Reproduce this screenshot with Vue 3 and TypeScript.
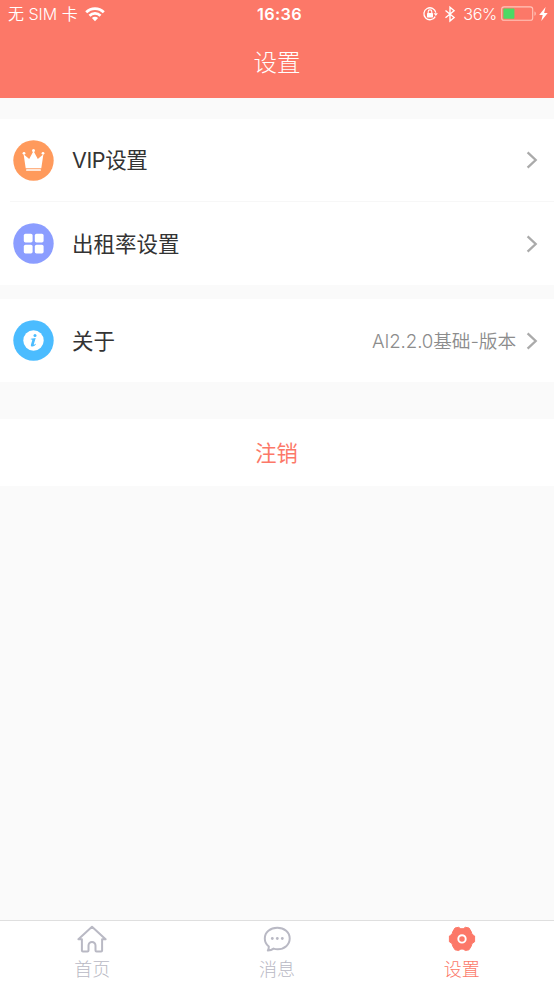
<script setup lang="ts">
import { ref } from 'vue'

interface Row {
  id: string
  label: string
  value?: string
}

const groups: Row[][] = [
  [
    { id: 'vip', label: 'VIP设置' },
    { id: 'rate', label: '出租率设置' },
  ],
  [{ id: 'about', label: '关于', value: 'AI2.2.0基础-版本' }],
]

const tabs = [
  { id: 'home', label: '首页' },
  { id: 'message', label: '消息' },
  { id: 'settings', label: '设置' },
]

const active = ref('settings')
</script>

<template>
  <div class="screen">
    <header class="top">
      <div class="status">
        <div class="carrier">
          <span>无 SIM 卡</span>
          <svg class="wifi" width="20" height="15" viewBox="0 0 20 15">
            <g fill="none" stroke="#fff" stroke-width="2.7">
              <path d="M1.2 5.3C6.1.3 13.9.3 18.8 5.3" />
              <path d="M4.5 8.7c3-3 8-3 11 0" />
            </g>
            <path fill="#fff" d="M6.9 11.1c1.8-1.7 4.4-1.7 6.2 0L10 14.2z" />
          </svg>
        </div>
        <div class="time">16:36</div>
        <div class="indicators">
          <svg width="16" height="16" viewBox="0 0 16 16">
            <path d="M13.2 10.6A6 6 0 1 1 13.8 6.6" fill="none" stroke="#fff" stroke-width="1.3" />
            <path d="M11.6 7.2h4.3l-2.1 2.8z" fill="#fff" />
            <rect x="5" y="7" width="6" height="4.4" rx=".6" fill="#fff" />
            <path d="M6.2 7V5.7a1.8 1.8 0 0 1 3.6 0V7" fill="none" stroke="#fff" stroke-width="1.1" />
          </svg>
          <svg class="bluetooth" width="12" height="18" viewBox="0 0 12 18">
            <path d="M1.5 5.5l8.6 7L6 16V2.3l4.1 3.5-8.6 7" fill="none" stroke="#fff" stroke-width="1.4" />
          </svg>
          <span class="percent">36%</span>
          <svg class="battery" width="36" height="16" viewBox="0 0 36 16">
            <rect x=".7" y=".9" width="31" height="13.4" rx="2.4" fill="none" stroke="#ffc5bb" stroke-width="1.1" />
            <rect x="2.4" y="2.5" width="11" height="10.2" rx=".8" fill="#4cd964" />
            <path d="M33.5 5.5c1.7.6 1.7 3.7 0 4.3z" fill="#ffc5bb" />
          </svg>
          <svg class="bolt" width="9" height="14" viewBox="0 0 9 14">
            <path d="M6.6 0L.2 7.9h3.5L2.3 14l6.4-8.1H5.1z" fill="#fff" />
          </svg>
        </div>
      </div>
      <h1 class="title">设置</h1>
    </header>

    <main class="content">
      <section v-for="(group, index) in groups" :key="index" class="group">
        <div v-for="row in group" :key="row.id" class="row">
          <svg class="row-icon" width="41" height="41" viewBox="0 0 41 41">
            <template v-if="row.id === 'vip'">
              <circle cx="20.5" cy="20.5" r="20.2" fill="#ff9a5c" />
              <path d="M10.6 14.2l5.6 4.8 4.3-8 4.3 8 5.6-4.8-2.1 14H12.7z" fill="#fff" />
              <g fill="#fff">
                <circle cx="11" cy="13.3" r="1.4" />
                <circle cx="20.5" cy="10.5" r="1.5" />
                <circle cx="30" cy="13.3" r="1.4" />
                <rect x="13.1" y="29.2" width="14.8" height="1.6" rx=".5" />
              </g>
            </template>
            <template v-else-if="row.id === 'rate'">
              <circle cx="20.5" cy="20.5" r="20.2" fill="#8b9dff" />
              <g fill="#fff">
                <rect x="10.8" y="10.7" width="8.8" height="8.8" rx="1.7" />
                <rect x="21.8" y="10.7" width="8.8" height="8.8" rx="1.7" />
                <rect x="10.8" y="21.7" width="8.8" height="8.8" rx="1.7" />
                <rect x="21.8" y="21.7" width="8.8" height="8.8" rx="1.7" />
              </g>
            </template>
            <template v-else>
              <circle cx="20.5" cy="20.5" r="20.2" fill="#4bbcff" />
              <circle cx="20.5" cy="20.5" r="10.2" fill="#fff" />
              <circle cx="22" cy="15.6" r="1.5" fill="#4bbcff" />
              <path d="M17.8 18.8l4.9-.7-1.9 6.2c-.2.8.6.6 1.7-.6l.5.4c-1.2 1.8-2.4 2.5-3.6 2.5-1.4 0-1.8-1-1.4-2.2l1.3-4.4c.1-.5-.4-.6-1.5-.6z" fill="#4bbcff" />
            </template>
          </svg>
          <span class="label" :class="row.id">{{ row.label }}</span>
          <span v-if="row.value" class="value">{{ row.value }}</span>
          <svg class="chevron" width="12" height="18" viewBox="0 0 12 18">
            <path d="M1.6 1.4L9.7 9l-8.1 7.6" fill="none" stroke="#aaa" stroke-width="2.3" />
          </svg>
        </div>
      </section>
      <button class="logout" type="button">注销</button>
    </main>

    <nav class="tabs">
      <button
        v-for="tab in tabs"
        :key="tab.id"
        type="button"
        class="tab"
        :class="{ active: active === tab.id }"
        @click="active = tab.id"
      >
        <svg width="30" height="28" viewBox="0 0 30 28" fill="none" stroke="currentColor" stroke-width="2">
          <path
            v-if="tab.id === 'home'"
            d="M1.4 14.3L15 1.8l13.6 12.5h-3.5v11.2q0 1-1 1h-4.6q-1 0-1-1v-5.1a3.5 3.5 0 0 0-7 0v5.1q0 1-1 1H5.9q-1 0-1-1V14.3z"
            stroke-linejoin="round"
          />
          <template v-else-if="tab.id === 'message'">
            <path d="M15.3 2.8c7 0 12.4 4.6 12.4 10.7s-5.2 10.7-12.1 10.7c-1.5 0-2.8-.2-4-.6-1.6 1.2-3.5 1.8-5.8 1.9.8-1.1 1.1-2.4 1-4C4.2 19.5 2.8 16.8 2.8 13.5 2.8 7.4 8.3 2.8 15.3 2.8z" stroke-linejoin="round" />
            <g fill="currentColor" stroke="none">
              <circle cx="10.3" cy="13.5" r="1.4" />
              <circle cx="15.3" cy="13.5" r="1.4" />
              <circle cx="20.3" cy="13.5" r="1.4" />
            </g>
          </template>
          <template v-else>
            <path
              d="M8 3L11.6 2.3Q15 5.4 18.4 2.3L22 3L24.2 6.6Q24.2 9.8 27.6 11V16.8Q24.2 18 24.2 21.2L22 24.8L18.4 25.5Q15 22.4 11.6 25.5L8 24.8L5.8 21.2Q5.8 18 2.4 16.8V11Q5.8 9.8 5.8 6.6z"
              fill="currentColor"
              stroke-width="1"
              stroke-linejoin="round"
            />
            <circle cx="15" cy="13.9" r="3.7" stroke="#fff" stroke-width="1.9" />
          </template>
        </svg>
        <span class="tab-label">{{ tab.label }}</span>
      </button>
    </nav>
  </div>
</template>

<style>
body {
  margin: 0;
}
</style>

<style scoped>
.screen {
  display: flex;
  flex-direction: column;
  width: 100%;
  height: 986px;
  overflow: hidden;
  background: #fafafa;
  font-family: Inter, 'Noto Sans CJK SC', sans-serif;
  color: #333;
}

button {
  border: 0;
  padding: 0;
  background: none;
  font-family: inherit;
  font-weight: inherit;
}

.top {
  flex: none;
  height: 98px;
  background: #fc7868;
  color: #fff;
}

.status {
  display: grid;
  grid-template-columns: 1fr auto 1fr;
  align-items: center;
  height: 28px;
  padding: 0 6px 0 8px;
  font-size: 16.5px;
  line-height: 28px;
}

.carrier,
.indicators {
  display: flex;
  align-items: center;
  font-weight: 350;
  white-space: nowrap;
}

.carrier {
  font-size: 16px;
}

.wifi {
  margin-left: 7px;
}

.time {
  padding-left: 3px;
  font-size: 16.3px;
  font-weight: 600;
  letter-spacing: 0.3px;
}

.indicators {
  justify-content: flex-end;
}

.bluetooth {
  margin-left: 6px;
}

.percent {
  margin-left: 7px;
  font-size: 16.2px;
  letter-spacing: -0.3px;
}

.battery {
  margin-left: 4px;
}

.bolt {
  margin-left: 2px;
}

.title {
  margin: 0;
  font-size: 23.5px;
  font-weight: 300;
  line-height: 70px;
  text-align: center;
}

.content {
  flex: 1;
  padding-top: 21px;
}

.group {
  margin-bottom: 14px;
  background: #fff;
}

.row {
  display: flex;
  align-items: center;
  box-sizing: border-box;
  height: 83px;
  padding: 0 16px 0 13px;
}

.row:not(:last-child) {
  height: 82px;
}

.row + .row {
  height: 84px;
  padding-top: 1px;
  background: linear-gradient(#f7f7f7, #f7f7f7) 10px 0 / 100% 1px no-repeat;
}

.label {
  flex: 1;
  margin-left: 18px;
  padding-bottom: 3px;
  font-size: 21.5px;
}

.label.vip {
  letter-spacing: -0.4px;
}

.value {
  margin-right: 10px;
  padding-bottom: 3px;
  font-size: 18.7px;
  font-weight: 350;
  letter-spacing: -0.1px;
  color: #8c8c8c;
}

.logout {
  display: block;
  width: 100%;
  height: 67px;
  margin-top: 37px;
  padding: 0 1px 3px 0;
  background: #fff;
  font-size: 21.3px;
  color: #fc7868;
}

.tabs {
  display: flex;
  flex: none;
  box-sizing: border-box;
  height: 66px;
  border-top: 1px solid #dfdfdf;
  background: #fff;
}

.tab {
  display: flex;
  flex: 1;
  flex-direction: column;
  align-items: center;
  padding-top: 4px;
  font-size: 18px;
  font-weight: 300;
  line-height: 30px;
  color: #b9b9c4;
}

.tab-label {
  padding-top: 2px;
}

.tab.active {
  color: #fc7868;
}
</style>
